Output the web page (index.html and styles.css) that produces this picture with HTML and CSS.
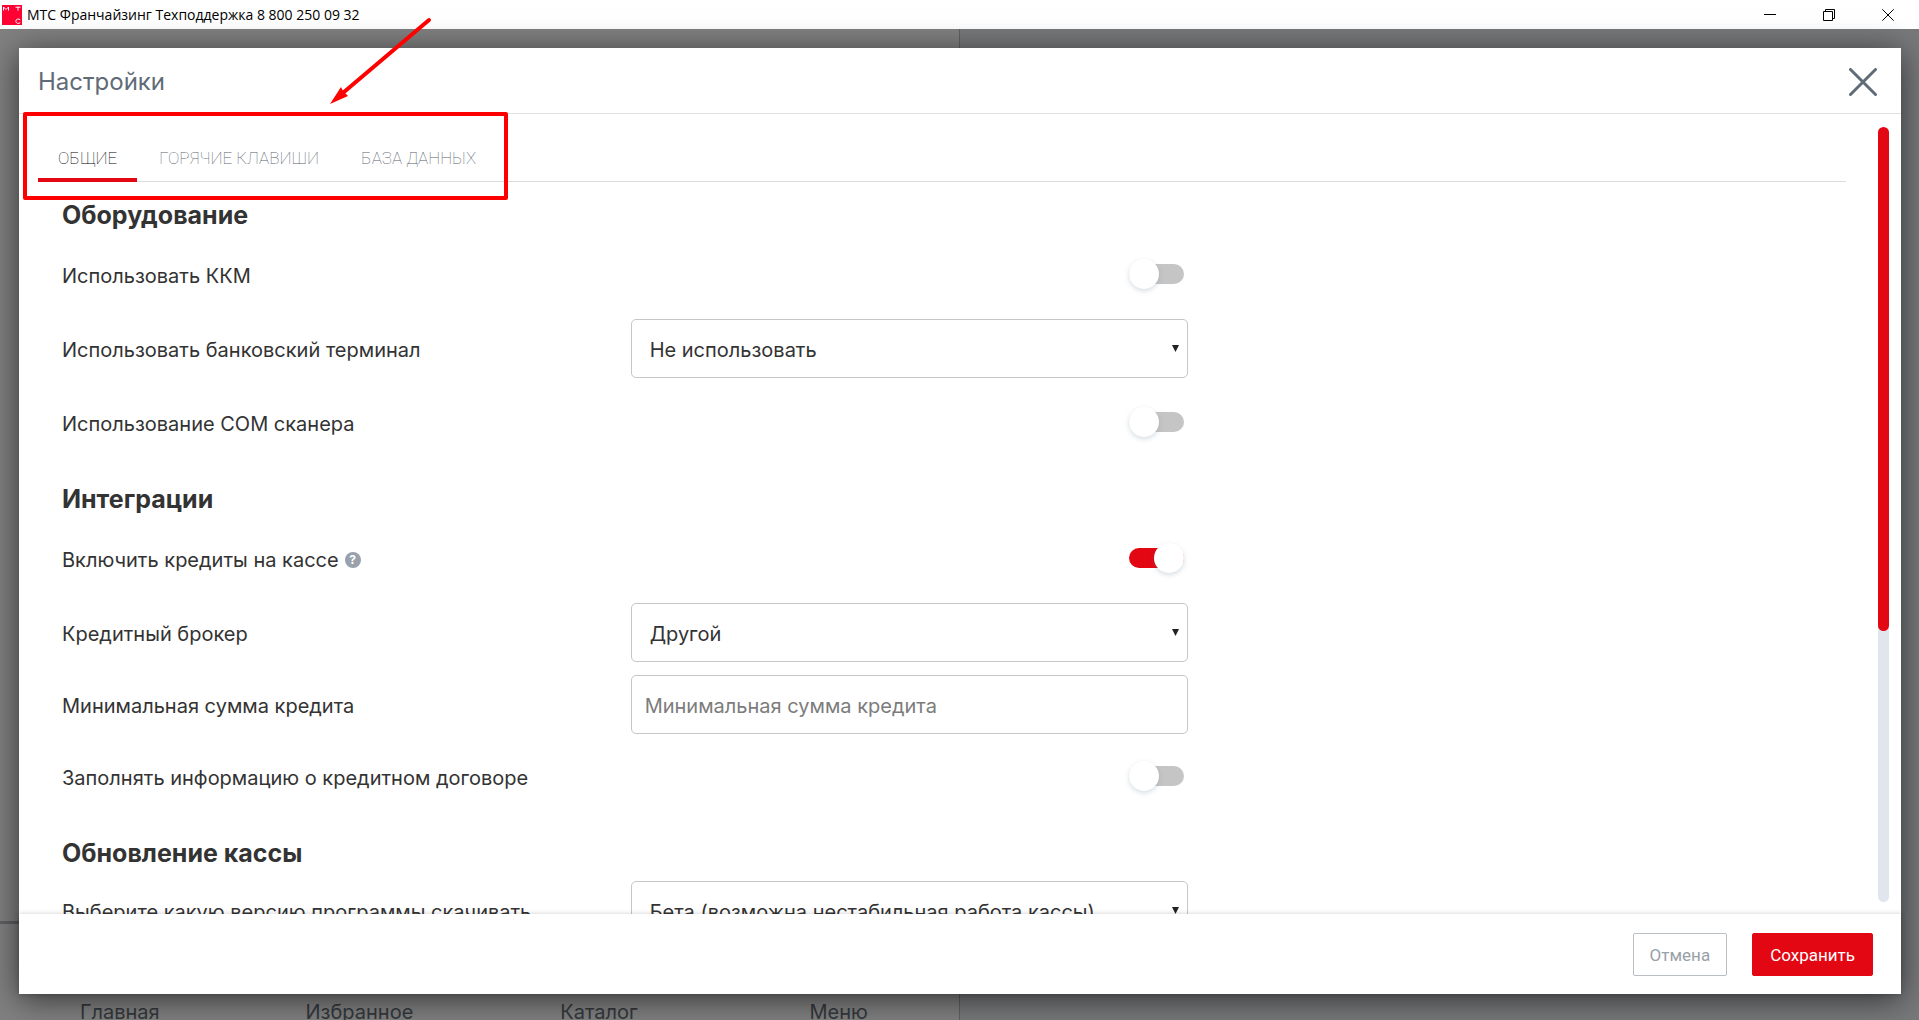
FILE: index.html
```html
<!DOCTYPE html>
<html lang="ru">
<head>
<meta charset="utf-8">
<title>МТС Франчайзинг</title>
<link rel="stylesheet" href="styles.css">
</head>
<body>
<header class="titlebar">
  <svg class="logo" width="20" height="20" viewBox="0 0 20 20" aria-hidden="true">
    <rect width="20" height="20" fill="#ff0032"/>
    <g fill="none" stroke="#fff" stroke-width="1">
      <path d="M1.500 5.500V2l2.500 2.500L6.500 2v3.500M13.500 2.200h5M16 2v3.700M18.300 14.700c-1.500-1.200-4.500-.8-4.500 1.500s3 2.800 4.500 1.500"/>
    </g>
  </svg>
  <span class="titlebar-text">МТС Франчайзинг Техподдержка 8 800 250 09 32</span>
  <div class="window-buttons">
    <button class="window-button" aria-label="Свернуть"><svg width="12" height="12" viewBox="0 0 12 12"><path d="M0 5.500h12"/></svg></button>
    <button class="window-button" aria-label="Восстановить"><svg width="12" height="12" viewBox="0 0 12 12"><path d="M.5 2.500h9v9h-9zM2.500 2.500v-2h9v9h-2"/></svg></button>
    <button class="window-button" aria-label="Закрыть окно"><svg width="12" height="12" viewBox="0 0 12 12"><path d="M.3.300l11.400 11.400M11.700.300L.3 11.700"/></svg></button>
  </div>
</header>

<div class="workspace">
  <div class="page">
    <nav class="page-nav">
      <a href="#home">Главная</a>
      <a href="#favorites">Избранное</a>
      <a href="#catalog">Каталог</a>
      <a href="#menu">Меню</a>
    </nav>
  </div>

  <section class="modal" role="dialog" aria-labelledby="modal-title">
    <header class="modal-header">
      <h1 class="modal-title" id="modal-title">Настройки</h1>
      <button class="modal-close" aria-label="Закрыть"><svg width="28" height="28" viewBox="0 0 28 28"><path d="M1.500 1.500l25 25M26.500 1.500l-25 25"/></svg></button>
    </header>

    <div class="modal-body">
      <div class="content">
        <div class="tabs" role="tablist">
          <button class="tab tab-active" role="tab" aria-selected="true">ОБЩИЕ</button>
          <button class="tab" role="tab" aria-selected="false">ГОРЯЧИЕ КЛАВИШИ</button>
          <button class="tab" role="tab" aria-selected="false">БАЗА ДАННЫХ</button>
        </div>

        <form class="panel">
          <section class="group">
            <h2 class="group-title">Оборудование</h2>
            <div class="row">
              <label for="kkm">Использовать ККМ</label>
              <input class="toggle" type="checkbox" id="kkm">
            </div>
            <div class="row">
              <label for="terminal">Использовать банковский терминал</label>
              <div class="select">
                <select class="field" id="terminal"><option>Не использовать</option></select>
                <svg class="arrow" width="7" height="7" viewBox="0 0 7 7"><path d="M0 0h7L3.500 7z"/></svg>
              </div>
            </div>
            <div class="row">
              <label for="scanner">Использование COM сканера</label>
              <input class="toggle" type="checkbox" id="scanner">
            </div>
          </section>

          <section class="group">
            <h2 class="group-title">Интеграции</h2>
            <div class="row">
              <div class="label-help">
                <label for="credits">Включить кредиты на кассе</label>
                <span class="help">?</span>
              </div>
              <input class="toggle" type="checkbox" id="credits" checked>
            </div>
            <div class="row">
              <label for="broker">Кредитный брокер</label>
              <div class="select">
                <select class="field" id="broker"><option>Другой</option></select>
                <svg class="arrow" width="7" height="7" viewBox="0 0 7 7"><path d="M0 0h7L3.500 7z"/></svg>
              </div>
            </div>
            <div class="row row-compact">
              <label for="minimum">Минимальная сумма кредита</label>
              <input class="field" type="text" id="minimum" placeholder="Минимальная сумма кредита">
            </div>
            <div class="row">
              <label for="contract">Заполнять информацию о кредитном договоре</label>
              <input class="toggle" type="checkbox" id="contract">
            </div>
          </section>

          <section class="group">
            <h2 class="group-title">Обновление кассы</h2>
            <div class="row row-compact">
              <label for="version">Выберите какую версию программы скачивать</label>
              <div class="select">
                <select class="field" id="version"><option>Бета (возможна нестабильная работа кассы)</option></select>
                <svg class="arrow" width="7" height="7" viewBox="0 0 7 7"><path d="M0 0h7L3.500 7z"/></svg>
              </div>
            </div>
          </section>
        </form>
      </div>
      <div class="scroll-track" aria-hidden="true"><div class="scroll-thumb"></div></div>
    </div>

    <footer class="modal-footer">
      <button class="button button-outline">Отмена</button>
      <button class="button button-primary">Сохранить</button>
    </footer>
  </section>
</div>

<div class="marker-frame"></div>
<svg class="marker-arrow" width="104" height="90" viewBox="0 0 104 90" aria-hidden="true">
  <path d="M101 3L16 75" fill="none" stroke="#f00" stroke-width="4" stroke-linecap="round"/>
  <path d="M2 87L13 70L15 74L18 77L20 79z" fill="#f00"/>
</svg>
</body>
</html>
```
FILE: styles.css
```css
* {
  box-sizing: border-box;
}

body {
  display: flex;
  flex-direction: column;
  height: 100vh;
  margin: 0;
  overflow: hidden;
  font: 20px/24px Inter, "Noto Sans", sans-serif;
  color: #333;
}

button {
  margin: 0;
  padding: 0;
  border: 0;
  background: none;
  font: inherit;
  cursor: pointer;
}

/* Window title bar */

.titlebar {
  display: flex;
  flex: none;
  align-items: center;
  height: 29px;
  padding: 0 2px;
  background: #fff;
  color: #000;
  font: 14px/20px "Open Sans", "Noto Sans", sans-serif;
}

.logo {
  margin-right: 5px;
}

.window-buttons {
  display: flex;
  height: 100%;
  margin-left: auto;
}

.window-button {
  display: grid;
  place-items: center;
  width: 59px;
}

.window-button svg {
  fill: none;
  stroke: #000;
}

/* Dimmed page behind the dialog */

.workspace {
  position: relative;
  flex: 1;
  min-height: 0;
  background: #78797b;
}

.page {
  display: flex;
  flex-direction: column;
  justify-content: flex-end;
  width: 50%;
  height: 100%;
  border-right: 1px solid #5f6062;
  background: #808080;
}

.page-nav {
  display: grid;
  grid-template-columns: repeat(4, 1fr);
  height: 99px;
  padding-top: 75px;
  overflow: hidden;
  border-top: 3px solid #5f6062;
  line-height: 26px;
  text-align: center;
}

.page-nav a {
  color: #33383d;
  text-decoration: none;
}

/* Settings dialog */

.modal {
  position: absolute;
  inset: 19px 18px 26px 19px;
  display: flex;
  flex-direction: column;
  background: #fff;
  box-shadow: 0 5px 30px rgba(0, 0, 0, .6);
}

.modal-header {
  display: flex;
  flex: none;
  align-items: center;
  justify-content: space-between;
  height: 66px;
  padding: 2px 24px 0 19px;
  border-bottom: 1px solid #dee0e2;
}

.modal-title {
  margin: 0;
  color: #606b78;
  font-size: 24px;
  font-weight: 400;
}

.modal-close {
  display: flex;
}

.modal-close svg {
  fill: none;
  stroke: #606b78;
  stroke-width: 3;
  stroke-linecap: round;
}

.modal-body {
  display: flex;
  flex: 1;
  min-height: 0;
}

.content {
  flex: 1;
  padding: 0 32px 0 19px;
  overflow: hidden;
}

.tabs {
  display: flex;
  gap: 2px;
  height: 68px;
  border-bottom: 1px solid #dadcde;
}

.tab {
  height: 68px;
  padding: 34px 20px 10px;
  border-bottom: 4px solid transparent;
  color: #57616c;
  font: 100 17px/20px Roboto, sans-serif;
}

.tab-active {
  border-color: #e30613;
  color: #000;
}

.panel {
  padding: 16px 0 0 24px;
}

.group + .group {
  margin-top: 23px;
}

.group-title {
  margin: 0 0 7px;
  padding-top: 2px;
  font-size: 25px;
  font-weight: 700;
  line-height: 30px;
}

.row {
  display: grid;
  grid-template-columns: 51fr 50fr 59fr;
  align-items: center;
  height: 74px;
}

.row-compact {
  height: 70px;
}

.row label {
  padding-top: 3px;
}

.label-help {
  display: flex;
  align-items: center;
  gap: 6px;
}

.help {
  width: 16px;
  height: 16px;
  margin-top: 4px;
  border-radius: 50%;
  background: #98a1ac;
  color: #fff;
  font-size: 12px;
  font-weight: 700;
  line-height: 16px;
  text-align: center;
}

.field {
  display: block;
  width: 100%;
  height: 59px;
  margin: 0;
  padding: 3px 13px 0;
  border: 1px solid #c6c6c6;
  border-radius: 5px;
  background: #fff;
  color: #333;
  font: inherit;
}

.field::placeholder {
  color: #7c7c7c;
  opacity: 1;
}

.select {
  position: relative;
}

.select .field {
  padding: 3px 18px 0;
  appearance: none;
}

.arrow {
  position: absolute;
  top: 26px;
  right: 9px;
  fill: #222;
  pointer-events: none;
}

.toggle {
  display: flex;
  align-items: center;
  justify-self: end;
  width: 55px;
  height: 20px;
  margin: 0 4px 0 0;
  border-radius: 10px;
  background: #c5c5c5;
  appearance: none;
}

.toggle::before {
  content: "";
  width: 30px;
  height: 30px;
  flex: none;
  border-radius: 50%;
  background: #fff;
  box-shadow: 0 2px 5px rgba(90, 120, 140, .25);
}

.toggle:checked {
  justify-content: flex-end;
  background: #e30613;
}

.scroll-track {
  width: 11px;
  margin: 13px 12px 12px 0;
  border-radius: 6px;
  background: #e1e5ee;
}

.scroll-thumb {
  height: 65%;
  border-radius: 6px;
  background: #e30613;
}

.modal-footer {
  z-index: 1;
  display: flex;
  flex: none;
  gap: 25px;
  justify-content: flex-end;
  padding: 19px 28px 18px;
  background: #fff;
  box-shadow: 0 0 5px rgba(0, 0, 0, .2);
}

.button {
  height: 43px;
  padding: 0 16px;
  border: 1px solid #b9bec3;
  border-radius: 2px;
  background: #fff;
  color: #98a1a9;
  font: 17px/20px Roboto, sans-serif;
}

.button-primary {
  padding: 0 17px;
  border-color: #e30613;
  background: #e30613;
  color: #fff;
}

/* Red annotation over the tabs */

.marker-frame {
  position: absolute;
  top: 112px;
  left: 23px;
  width: 485px;
  height: 88px;
  border: 4px solid #f00;
  border-radius: 2px;
}

.marker-arrow {
  position: absolute;
  top: 17px;
  left: 328px;
}
```
